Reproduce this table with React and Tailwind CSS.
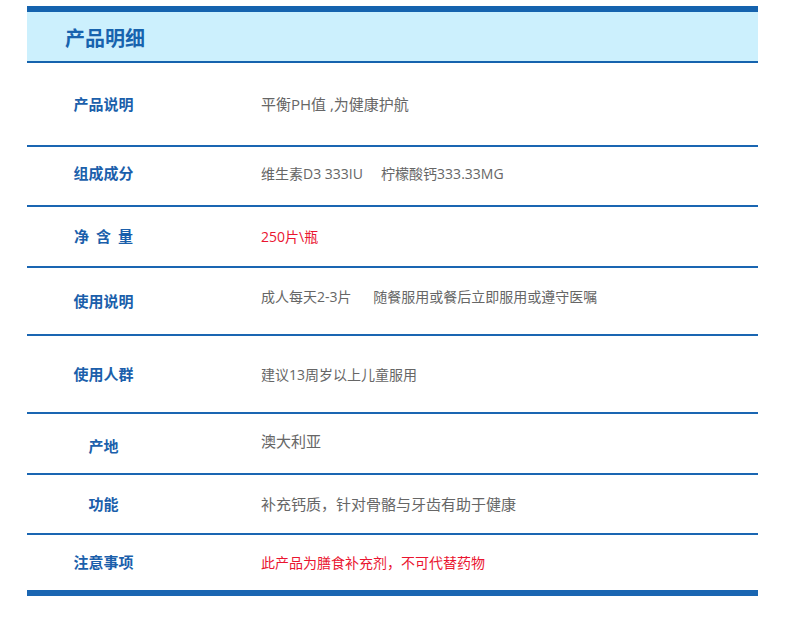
const rows = [
  { label: "产品说明", value: "平衡PH值 ,为健康护航", h: "h-[82px]", size: "text-[15px]" },
  { label: "组成成分", value: "维生素D3 333IU\u00a0\u00a0\u00a0\u00a0\u00a0柠檬酸钙333.33MG", h: "h-[58px]", vShift: "mb-[6px]", lShift: "mb-[6px]" },
  { label: "净 含 量", value: "250片\\瓶", h: "h-[59px]", red: true, spaced: true },
  { label: "使用说明", value: "成人每天2-3片\u00a0\u00a0\u00a0\u00a0\u00a0\u00a0随餐服用或餐后立即服用或遵守医嘱", h: "h-[66px]", vShift: "mb-[10px]" },
  { label: "使用人群", value: "建议13周岁以上儿童服用", h: "h-[76px]" },
  { label: "产地", value: "澳大利亚", h: "h-[59px]", vShift: "mb-[5px]", lShift: "mt-[5px]", size: "text-[15px]" },
  { label: "功能", value: "补充钙质，针对骨骼与牙齿有助于健康", h: "h-[58px]", size: "text-[15px]" },
  { label: "注意事项", value: "此产品为膳食补充剂，不可代替药物", h: "h-[55px]", red: true, last: true },
];

export default function App() {
  return (
    <div
      className="min-h-screen bg-white pt-[6px]"
      style={{ fontFamily: '"Open Sans", "Noto Sans CJK SC", sans-serif' }}
    >
      <div className="ml-[27px] w-[731px]">
        {/* header */}
        <div className="border-t-[6px] border-b-2 border-[#1563ae] bg-[#ccf0fd]">
          <div className="flex h-[49px] items-center pl-[38px] pt-[4px]">
            <span className="text-[20px] font-bold text-[#1763ae]">产品明细</span>
          </div>
        </div>

        {rows.map((r) => (
          <div
            key={r.label}
            className={`flex items-center ${r.h} ${
              r.last ? "border-b-[6px]" : "border-b-2"
            } border-[#1a66b2] box-content`}
          >
            <div className={`flex w-[153px] justify-center ${r.lShift || ""}`}>
              {r.spaced ? (
                <span className="flex gap-[7px] text-[15px] font-semibold text-[#1b5fab]">
                  <span>净</span>
                  <span>含</span>
                  <span>量</span>
                </span>
              ) : (
                <span className="text-[15px] font-semibold text-[#1b5fab]">{r.label}</span>
              )}
            </div>
            <div
              className={`pl-[81px] ${r.size || "text-[14px]"} ${
                r.red ? "text-[#ea1530]" : "text-[#666666]"
              } ${r.vShift || ""}`}
            >
              {r.value}
            </div>
          </div>
        ))}
      </div>
    </div>
  );
}
